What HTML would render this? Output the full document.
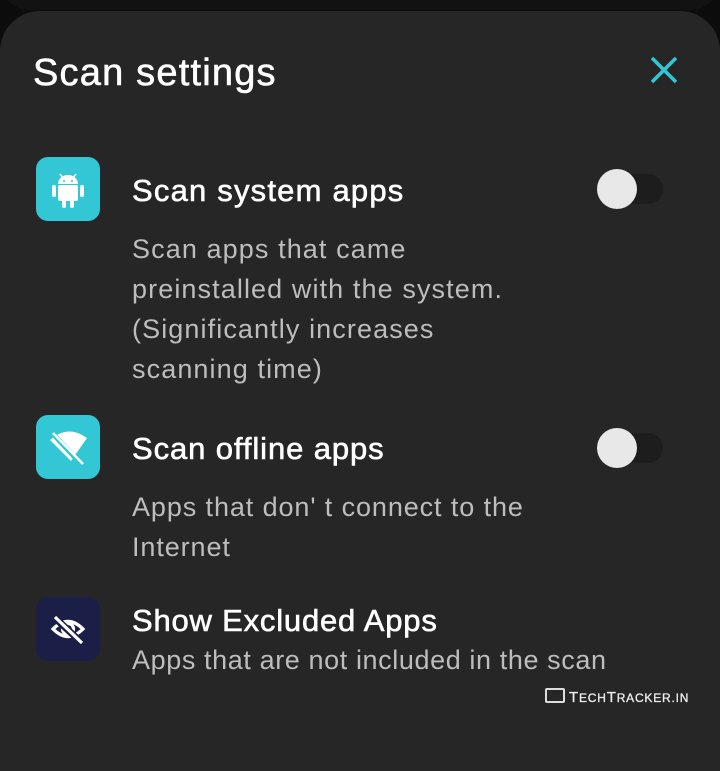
<!DOCTYPE html>
<html><head><style>
body{margin:0;width:720px;height:721px;background:#0c0c0c;overflow:hidden;font-family:"Liberation Sans",sans-serif;position:relative}
.top{position:absolute;left:0;top:-40px;width:720px;height:50px;background:#121212;border-radius:0 0 30px 30px}
.sheet{position:absolute;left:0;top:11px;width:720px;height:760px;background:#262626;border-radius:40px 40px 0 0}
.t{position:absolute;color:#fff;white-space:nowrap;-webkit-text-stroke:0.6px #fff}
.d{position:absolute;color:#bdbdbd;font-size:27px;line-height:40px;letter-spacing:1.1px;white-space:nowrap}
.ic{position:absolute;left:36px;width:64px;height:64px;border-radius:12px;background:#33c7d6}
.tg{position:absolute;width:66px;height:30px;border-radius:15px;background:#1d1d1d}
.tg::before{content:"";position:absolute;left:0;top:-5px;width:40px;height:40px;border-radius:50%;background:#e8e8e8}
</style></head><body>
<div class="top"></div>
<div class="sheet"></div>
<div class="t" style="left:33px;top:52px;font-size:38px;letter-spacing:1.2px">Scan settings</div>
<svg style="position:absolute;left:649px;top:55px" width="30" height="30" viewBox="0 0 30 30"><path d="M3 3L27 27M27 3L3 27" stroke="#33c7d6" stroke-width="3.5"/></svg>

<div class="ic" style="top:157px"><svg width="64" height="64" viewBox="0 0 64 64" fill="#fff"><path d="M22 27a10 9 0 0 1 20 0z"/><path d="M24 17l3 4M40 17l-3 4" stroke="#fff" stroke-width="1.5"/><rect x="22" y="28" width="20" height="16" rx="2"/><rect x="16" y="28" width="4" height="12" rx="2"/><rect x="44" y="28" width="4" height="12" rx="2"/><rect x="26" y="42" width="4" height="9" rx="2"/><rect x="34" y="42" width="4" height="9" rx="2"/><circle cx="28" cy="24" r="1" fill="#33c7d6"/><circle cx="36" cy="24" r="1" fill="#33c7d6"/></svg></div>
<div class="t" style="left:132px;top:173px;font-size:31px;letter-spacing:1.2px">Scan system apps</div>
<div class="tg" style="left:597px;top:174px"></div>
<div class="d" style="left:132px;top:229px">Scan apps that came<br>preinstalled with the system.<br>(Significantly increases<br>scanning time)</div>

<div class="ic" style="top:415px"><svg width="64" height="64" viewBox="0 0 64 64" fill="#fff"><path d="M14 25Q32 9 51 23L35 46Z"/><path d="M17 19L47 51" stroke="#33c7d6" stroke-width="5"/><path d="M17 18L47 49" stroke="#fff" stroke-width="2.5"/></svg></div>
<div class="t" style="left:132px;top:431px;font-size:31px;letter-spacing:0.9px">Scan offline apps</div>
<div class="tg" style="left:597px;top:433px"></div>
<div class="d" style="left:132px;top:487px;letter-spacing:0.9px">Apps that don' t connect to the<br>Internet</div>

<div class="ic" style="top:597px;background:#1b1f48"><svg width="64" height="64" viewBox="0 0 64 64" fill="none" stroke="#fff" stroke-width="3.2"><path d="M17 32Q32 17 47 32Q32 47 17 32Z"/><circle cx="32" cy="32" r="5.5"/><path d="M19 21L45 45" stroke="#1b1f48" stroke-width="7"/><path d="M19 20L46 46"/></svg></div>
<div class="t" style="left:132px;top:603px;font-size:31px;letter-spacing:0.8px">Show Excluded Apps</div>
<div class="d" style="left:132px;top:640px;letter-spacing:0.6px">Apps that are not included in the scan</div>

<div style="position:absolute;left:545px;top:688px;width:20px;height:15px;border:2px solid #ddd;border-radius:2px;box-sizing:border-box"></div>
<div class="t" style="left:569px;top:689px;font-size:15px;color:#eee;letter-spacing:0.8px;-webkit-text-stroke:0.3px #eee">T<span style="font-size:12px">ECH</span>T<span style="font-size:12px">RACKER.IN</span></div>
</body></html>
